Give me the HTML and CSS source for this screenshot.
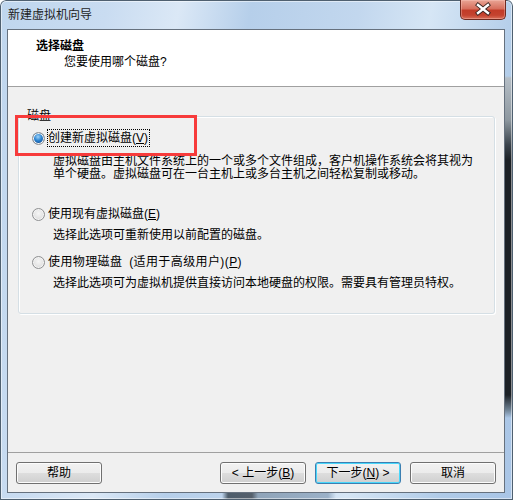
FILE: index.html
```html
<!DOCTYPE html>
<html lang="zh-CN">
  <head>
    <meta charset="UTF-8" />
    <title>新建虚拟机向导</title>
    <link rel="stylesheet" href="styles.css">
  </head>
  <body>
    <div class="window">
      <div class="titlebar">
        <span class="titlebar__text">新建虚拟机向导</span>
        <div class="close-button">
          <svg width="46" height="20" viewBox="0 0 46 20">
            <path d="M18 6 L28 14 M28 6 L18 14" stroke="#3b2420" stroke-width="4.2" stroke-linecap="square" fill="none" />
            <path d="M18 6 L28 14 M28 6 L18 14" stroke="#ffffff" stroke-width="2.4" stroke-linecap="square" fill="none" />
          </svg>
        </div>
      </div>
      <div class="client">
        <header class="wizard-header">
          <p class="wizard-header__title">选择磁盘</p>
          <p class="wizard-header__subtitle">您要使用哪个磁盘?</p>
        </header>
        <main class="wizard-body">
          <fieldset class="group">
            <legend class="group__label">磁盘</legend>
            <div class="option option--first">
              <div class="option__row">
                <span class="radio radio--checked"></span>
                <span class="option__text option__text--focus">创建新虚拟磁盘(<u>V</u>)</span>
              </div>
              <p class="option__desc">虚拟磁盘由主机文件系统上的一个或多个文件组成，客户机操作系统会将其视为<br>单个硬盘。虚拟磁盘可在一台主机上或多台主机之间轻松复制或移动。</p>
            </div>
            <div class="option">
              <div class="option__row">
                <span class="radio"></span>
                <span class="option__text">使用现有虚拟磁盘(<u>E</u>)</span>
              </div>
              <p class="option__desc">选择此选项可重新使用以前配置的磁盘。</p>
            </div>
            <div class="option">
              <div class="option__row">
                <span class="radio"></span>
                <span class="option__text option__text--wide">使用物理磁盘 (适用于高级用户)(<u>P</u>)</span>
              </div>
              <p class="option__desc">选择此选项可为虚拟机提供直接访问本地硬盘的权限。需要具有管理员特权。</p>
            </div>
          </fieldset>
        </main>
        <footer class="wizard-footer">
          <button class="button">帮助</button>
          <button class="button button--push">&lt; 上一步(<u>B</u>)</button>
          <button class="button button--default">下一步(<u>N</u>) &gt;</button>
          <button class="button">取消</button>
        </footer>
      </div>
      <div class="highlight"></div>
    </div>
  </body>
</html>
```

FILE: styles.css
```css
html,
body {
  margin: 0;
  padding: 0;
  background-color: #ffffff;
}
p {
  margin: 0;
}
.window {
  position: relative;
  display: flex;
  flex-direction: column;
  width: 513px;
  height: 500px;
  box-sizing: border-box;
  padding-bottom: 7px;
  border-radius: 6px 6px 0 0;
  background:
    linear-gradient(to bottom, transparent 0, transparent 76px, #b5bec6 78px, #8d979f 120px, #3a434b 145px, #1c2126 160px, #1c2126 395px, #6f8294 410px, transparent 418px) right top / 8px 100% no-repeat,
    linear-gradient(to right, transparent 222px, #4e5d6b 228px, #55606c 252px, #8fa4b9 258px, #9bb1c8 328px, transparent 336px) left bottom / 100% 7px no-repeat,
    linear-gradient(100deg, #bfd6ee 0%, #c9dcf1 18%, #dbe8f6 30%, #b6cfea 42%, #c2d7ee 60%, #d6e6f5 72%, #b0cbe8 88%, #a9c5e6 100%);
  box-shadow: inset 0 0 0 1px #4f6070, inset 0 0 0 2px rgba(255, 255, 255, 0.5);
  font-family: "Liberation Sans", "Noto Sans CJK SC", sans-serif;
  font-size: 12px;
  color: #000000;
}
.titlebar {
  display: flex;
  align-items: flex-start;
  height: 29px;
  padding: 0 7px 0 8px;
}
.titlebar__text {
  padding-top: 8px;
  line-height: 14px;
  color: #1e1e1e;
}
.close-button {
  margin-left: auto;
  width: 46px;
  height: 20px;
  box-sizing: border-box;
  border: 1px solid #6e2a20;
  border-top: none;
  border-radius: 0 0 5px 5px;
  background: linear-gradient(to bottom, #e9a595 0%, #d7705e 45%, #c23c28 55%, #c4432f 80%, #d9705a 100%);
  box-shadow: inset 0 0 0 1px rgba(255, 210, 200, 0.35);
}
.close-button svg {
  display: block;
  margin: -1px 0 0 -1px;
}
.client {
  flex: 1;
  display: flex;
  flex-direction: column;
  margin: 0 8px 0 7px;
  border: 1px solid #66717e;
  background-color: #f0f0f0;
}
.wizard-header {
  height: 48px;
  padding: 8px 0 0 28px;
  background-color: #ffffff;
  border-bottom: 1px solid #a0a0a0;
  line-height: 16px;
}
.wizard-header__title {
  font-weight: bold;
}
.wizard-header__subtitle {
  margin-left: 28px;
}
.wizard-body {
  flex: 1;
  padding: 22px 9px 0 10px;
}
.group {
  height: 205px;
  box-sizing: border-box;
  margin: 0;
  padding: 6px 13px 0 13px;
  border: 1px solid #d5dfe5;
  border-radius: 3px;
  box-shadow: inset 1px 1px 0 #ffffff, 1px 1px 0 #ffffff;
}
.group__label {
  margin-left: -7px;
  padding: 0 2px;
  line-height: 14px;
}
.option {
  margin-bottom: 11px;
}
.option__row {
  display: flex;
  align-items: center;
}
.option__text {
  border: 1px dotted transparent;
  padding: 1px 1px 1px 0;
  line-height: 14px;
}
.option__text--focus {
  border-color: #000000;
}
.option__text--wide {
  word-spacing: 3px;
  letter-spacing: 0.4px;
}
.option__desc {
  margin-top: 6px;
  padding-left: 21px;
  line-height: 13px;
}
.option--first .option__desc {
  margin-top: 8px;
  min-height: 39px;
}
.radio {
  width: 13px;
  height: 13px;
  box-sizing: border-box;
  margin-right: 2px;
  border-radius: 50%;
  border: 1px solid #8f9092;
  background: radial-gradient(circle at 50% 40%, #f6f6f6 0%, #e2e2e2 60%, #d0d0d0 100%);
  box-shadow: inset 0 0 0 1px #f4f4f4;
}
.radio--checked {
  background: radial-gradient(circle at 45% 35%, #9fd3f8 0%, #2a83d1 40%, #154f92 75%, #e6e6e6 78%, #d4d4d4 100%);
}
.wizard-footer {
  display: flex;
  gap: 9px;
  padding: 9px 8px 8px 8px;
  border-top: 1px solid #a0a0a0;
}
.button {
  width: 86px;
  height: 22px;
  padding: 0;
  border: 1px solid #707070;
  border-radius: 3px;
  background: linear-gradient(to bottom, #f2f2f2 0%, #ebebeb 50%, #dddddd 51%, #cfcfcf 100%);
  box-shadow: inset 0 0 0 1px #fcfcfc;
  font-family: "Liberation Sans", "Noto Sans CJK SC", sans-serif;
  font-size: 12px;
  line-height: 14px;
  color: #000000;
}
.button--push {
  margin-left: auto;
}
.button--default {
  border-color: #3c7fb1;
  box-shadow: inset 0 0 0 1px #48d7fb;
}
.highlight {
  position: absolute;
  left: 15px;
  top: 115px;
  width: 182px;
  height: 41px;
  box-sizing: border-box;
  border: 3px solid #f73b3b;
}
```
